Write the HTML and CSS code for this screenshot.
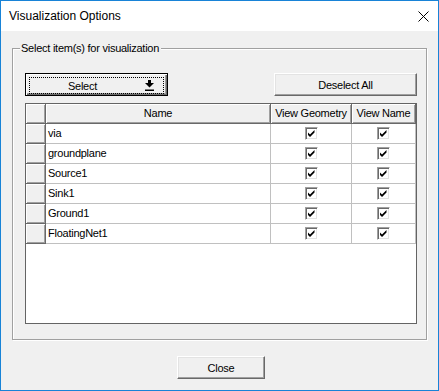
FILE: index.html
```html
<!DOCTYPE html>
<html lang="en">
<head>
    <meta charset="UTF-8">
    <title>Visualization Options</title>
    <link rel="stylesheet" href="styles.css">
</head>
<body>

    <div class="window">
        <!-- Title bar -->
        <div class="titlebar">
            <span class="title">Visualization Options</span>
            <svg class="close-x" width="11" height="11" viewBox="0 0 11 11">
                <path d="M0.5 0.5 L10.5 10.5 M10.5 0.5 L0.5 10.5" stroke="#000" stroke-width="1"/>
            </svg>
        </div>

        <div class="dialog-body">
            <fieldset class="group">
                <legend>Select item(s) for visualization</legend>
                <div class="group-body">
                    <div class="toolbar">
                        <button class="btn btn-default btn-wide">
                            <span class="focus">
                                <span class="label">Select</span>
                                <svg class="arrow" width="9" height="11" viewBox="0 0 9 11">
                                    <rect x="3" y="0" width="3" height="3" fill="#000"/>
                                    <polygon points="0,3 9,3 4.5,7.5" fill="#000"/>
                                    <rect x="0" y="9.5" width="9" height="1.5" fill="#000"/>
                                </svg>
                            </span>
                        </button>
                        <button class="btn btn-wide">Deselect All</button>
                    </div>

                    <div class="grid" id="grid">
                        <div class="row head">
                            <div class="hcell"></div>
                            <div class="hcell">Name</div>
                            <div class="hcell">View Geometry</div>
                            <div class="hcell">View Name</div>
                        </div>
                    </div>
                </div>
            </fieldset>

            <div class="footer">
                <button class="btn btn-close">Close</button>
            </div>
        </div>
    </div>

    <script>
        // Fill the grid rows
        var items = ['via', 'groundplane', 'Source1', 'Sink1', 'Ground1', 'FloatingNet1'];
        var grid = document.getElementById('grid');
        var checkSvg = '<svg width="11" height="11" viewBox="0 0 11 11"><polygon points="2,4.5 4,6.5 8.5,2 8.5,4.5 4,9 2,7" fill="#000"/></svg>';

        items.forEach(function(name) {
            var row = document.createElement('div');
            row.className = 'row';
            row.innerHTML =
                '<div class="hcell"></div>' +
                '<div class="cell name">' + name + '</div>' +
                '<div class="cell box"><span class="check">' + checkSvg + '</span></div>' +
                '<div class="cell box"><span class="check">' + checkSvg + '</span></div>';
            grid.appendChild(row);
        });
    </script>

</body>
</html>
```

FILE: styles.css
```css
body {
    margin: 0;
    font-family: "Liberation Sans", Arial, sans-serif;
    font-size: 11px;
    letter-spacing: -0.25px;
    color: #000;
}
.window {
    width: 439px;
    height: 391px;
    box-sizing: border-box;
    border: 1px solid #1883d7;
    background-color: #f0f0f0;
    display: flex;
    flex-direction: column;
}
.titlebar {
    height: 30px;
    background-color: #fff;
    display: flex;
    align-items: center;
    justify-content: space-between;
    padding: 0 9px 0 8px;
}
.title {
    font-size: 12px;
    letter-spacing: 0;
}
.close-x {
    display: block;
}
.dialog-body {
    padding: 11px 11px 0 11px;
}
/* Etched group box */
.group {
    margin: 0;
    padding: 0;
    border: 1px solid #a0a0a0;
    box-shadow: inset 1px 1px #fff, 1px 1px #fff;
}
.group legend {
    margin-left: 7px;
    padding: 0 2px 0 1px;
    line-height: 13px;
    background-color: #f0f0f0;
}
.group-body {
    padding: 18px 9px 15px 12px;
}
.toolbar {
    display: flex;
    justify-content: space-between;
    margin-bottom: 7px;
}
.btn {
    font-family: inherit;
    font-size: 11px;
    letter-spacing: -0.25px;
    color: #000;
    height: 23px;
    padding: 0;
    background-color: #f0f0f0;
    border: 1px solid;
    border-color: #fff #696969 #696969 #fff;
    box-shadow: inset -1px -1px #a0a0a0, inset 1px 1px #e3e3e3;
}
.btn-wide {
    width: 143px;
}
.btn-default {
    border-color: #000;
    box-shadow: inset 1px 1px #fff, inset -1px -1px #696969, inset -2px -2px #a0a0a0;
}
.focus {
    display: flex;
    align-items: center;
    height: 15px;
    margin: 3px;
    border: 1px dotted #000;
}
.focus .label {
    flex: 1;
    text-align: center;
}
.arrow {
    display: block;
    margin: 0 9px 0 10px;
}
/* Data grid */
.grid {
    width: 392px;
    height: 221px;
    box-sizing: border-box;
    border: 1px solid #646464;
    background-color: #fff;
}
.row {
    display: grid;
    grid-template-columns: 20px 225px 81px 64px;
    height: 20px;
}
.hcell {
    box-sizing: border-box;
    background-color: #f0f0f0;
    border-right: 1px solid #696969;
    border-bottom: 1px solid #696969;
    box-shadow: inset 1px 1px #fff, inset -1px -1px #a0a0a0;
    text-align: center;
    line-height: 19px;
}
.cell {
    box-sizing: border-box;
    border-right: 1px solid #c0c0c0;
    border-bottom: 1px solid #c0c0c0;
    line-height: 19px;
}
.cell.name {
    padding-left: 2px;
}
.cell.box {
    display: flex;
    align-items: center;
    justify-content: center;
}
.check {
    width: 13px;
    height: 13px;
    box-sizing: border-box;
    border: 1px solid;
    border-color: #a0a0a0 #fff #fff #a0a0a0;
    box-shadow: inset 1px 1px #696969, inset -1px -1px #e3e3e3;
    background-color: #fff;
}
.check svg {
    display: block;
}
.footer {
    display: flex;
    justify-content: center;
    padding-left: 3px;
    margin-top: 16px;
}
.btn-close {
    width: 88px;
}
```
